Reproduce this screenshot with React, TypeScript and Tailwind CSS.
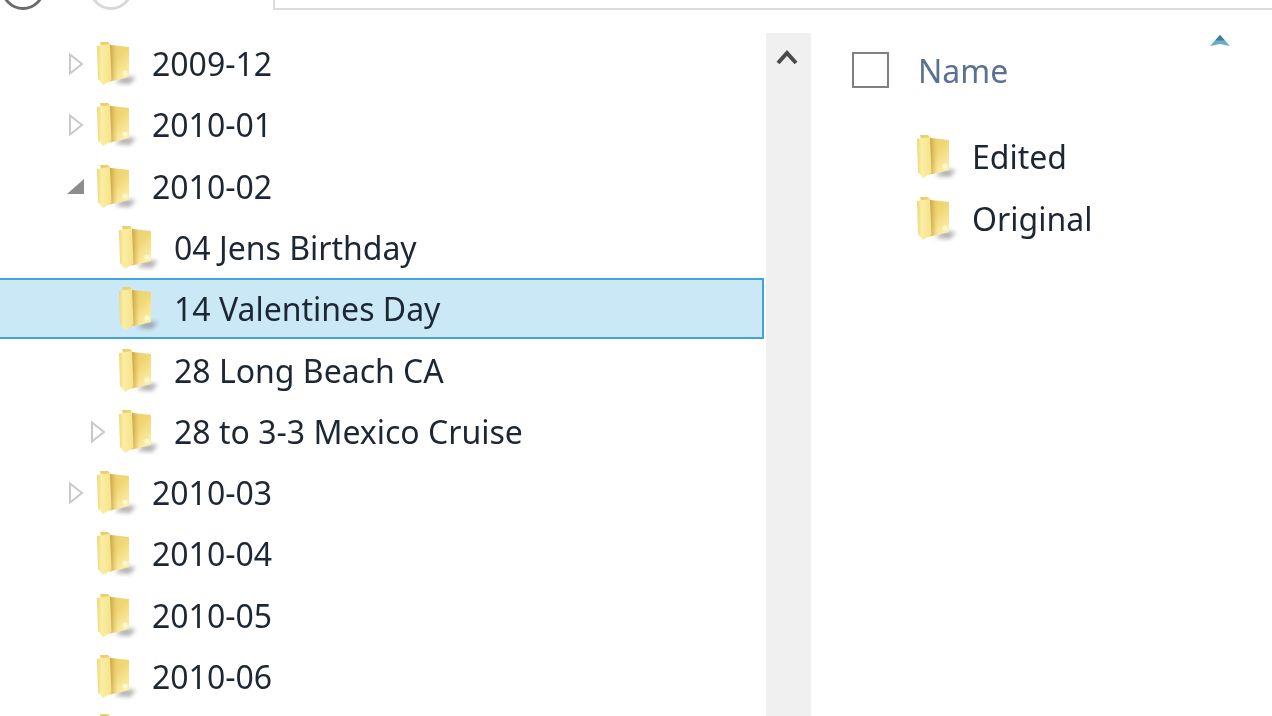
import { useId } from 'react'

type Arrow = 'closed' | 'open' | 'none'

const treeRows: { label: string; indent: 0 | 1; arrow: Arrow; selected?: boolean }[] = [
  { label: '2009-12', indent: 0, arrow: 'closed' },
  { label: '2010-01', indent: 0, arrow: 'closed' },
  { label: '2010-02', indent: 0, arrow: 'open' },
  { label: '04 Jens Birthday', indent: 1, arrow: 'none' },
  { label: '14 Valentines Day', indent: 1, arrow: 'none', selected: true },
  { label: '28 Long Beach CA', indent: 1, arrow: 'none' },
  { label: '28 to 3-3 Mexico Cruise', indent: 1, arrow: 'closed' },
  { label: '2010-03', indent: 0, arrow: 'closed' },
  { label: '2010-04', indent: 0, arrow: 'none' },
  { label: '2010-05', indent: 0, arrow: 'none' },
  { label: '2010-06', indent: 0, arrow: 'none' },
]

function FolderIcon() {
  const id = useId()
  return (
    <svg width="42" height="46" viewBox="0 0 42 46" className="shrink-0" aria-hidden="true">
      <defs>
        <linearGradient id={`${id}-back`} x1="0" y1="0" x2="0.7" y2="1">
          <stop offset="0" stopColor="#ecce6c" />
          <stop offset="0.55" stopColor="#f0d674" />
          <stop offset="1" stopColor="#fdeea6" />
        </linearGradient>
        <linearGradient id={`${id}-front`} x1="0" y1="0" x2="1" y2="0">
          <stop offset="0" stopColor="#efd475" />
          <stop offset="0.3" stopColor="#fbeea4" />
          <stop offset="1" stopColor="#f6e28a" />
        </linearGradient>
        <linearGradient id={`${id}-fold`} x1="0" y1="0" x2="1" y2="0">
          <stop offset="0" stopColor="#bf9a3c" stopOpacity="0.85" />
          <stop offset="1" stopColor="#e2c468" stopOpacity="0" />
        </linearGradient>
        <filter id={`${id}-shadow`} x="-30%" y="-30%" width="160%" height="160%">
          <feGaussianBlur stdDeviation="2" />
        </filter>
        <filter id={`${id}-soft`} x="-10%" y="-10%" width="120%" height="120%">
          <feGaussianBlur stdDeviation="0.6" />
        </filter>
      </defs>
      <path d="M26 35 L39 36 L33 43 L18 42 Z" fill="#7f7f7f" opacity="0.6" filter={`url(#${id}-shadow)`} />
      <g filter={`url(#${id}-soft)`}>
        <path d="M3 1 L11 1 L14 4 L32 6 L32 36 L12 41 Z" fill={`url(#${id}-back)`} />
        <path d="M13 4 L21 5 L21 39 L13 40 Z" fill={`url(#${id}-fold)`} />
        <path d="M0 5 L13 3 L14.5 39 L6 44 L1 38 Z" fill={`url(#${id}-front)`} />
        <circle cx="28" cy="32" r="2.6" fill="#fffbe0" opacity="0.8" />
      </g>
    </svg>
  )
}

function TreeArrow({ arrow }: { arrow: Arrow }) {
  if (arrow === 'none') return <span className="w-[18px] shrink-0" />
  if (arrow === 'open') {
    return (
      <svg width="18" height="18" viewBox="0 0 18 18" className="shrink-0" aria-hidden="true">
        <path d="M0 16 L17 16 L17 1 Z" fill="#8c8c8c" />
      </svg>
    )
  }
  return (
    <svg width="18" height="24" viewBox="0 0 18 24" className="shrink-0" aria-hidden="true">
      <path d="M3 2.5 L15 12 L3 21.5 Z" fill="#fff" stroke="#c9c9c9" strokeWidth="2" />
    </svg>
  )
}

function TreeRow({ label, indent, arrow, selected }: (typeof treeRows)[number]) {
  return (
    <div
      className={
        selected
          ? '-mt-[0.6px] mb-[0.6px] flex h-[61.3px] shrink-0 items-center border-2 border-l-0 border-[#3fa6dd] bg-[#cbe8f6]'
          : 'flex h-[61.3px] shrink-0 items-center'
      }
    >
      <div className={indent === 1 ? 'ml-[89px] flex items-center' : 'ml-[67px] flex items-center'}>
        <TreeArrow arrow={arrow} />
        <span className="ml-[12px] flex">
          <FolderIcon />
        </span>
        <span className="ml-[13px] whitespace-nowrap text-[32px] leading-none text-[#1c2733]">{label}</span>
      </div>
    </div>
  )
}

function ListRow({ label }: { label: string }) {
  return (
    <div className="flex h-[61.5px] items-center">
      <FolderIcon />
      <span className="ml-[13px] text-[32px] leading-none text-[#1c2733]">{label}</span>
    </div>
  )
}

export default function App() {
  return (
    <div className="h-[716px] w-[1272px] overflow-hidden bg-white blur-[0.6px] [font-family:'Noto_Sans','Open_Sans',sans-serif]">
      <div className="flex h-[33.4px] items-start">
        <div className="flex h-[10px] w-[273px] shrink-0 items-end overflow-hidden pl-[1px]">
          <span className="h-[44px] w-[44px] shrink-0 rounded-full border-[3px] border-[#6b6b6b]" />
          <span className="ml-[44px] h-[44px] w-[44px] shrink-0 rounded-full border-[3px] border-[#d8d8d8]" />
        </div>
        <div className="h-[10px] flex-1 border-b-2 border-l-2 border-[#dcdcdc]" />
      </div>

      <div className="flex h-[683px]">
        <div className="flex w-[764px] shrink-0 flex-col overflow-hidden">
          {treeRows.map((row) => (
            <TreeRow key={row.label} {...row} />
          ))}
          {/* next folder is cut by the window, only its top shows */}
          <div className="ml-[97px] mt-[5px] shrink-0">
            <FolderIcon />
          </div>
        </div>

        <div className="ml-[2px] flex w-[45px] shrink-0 justify-center bg-[#f0f0f0] pr-[4px] pt-[16px]">
          <svg width="24" height="16" viewBox="0 0 24 16" aria-hidden="true">
            <path d="M3 14 L12 4 L21 14" fill="none" stroke="#4a4a4a" strokeWidth="4" />
          </svg>
        </div>

        <div className="relative flex-1 pl-[41px]">
          <svg width="22" height="14" viewBox="0 0 22 14" className="absolute left-[398px] top-[1px]" aria-hidden="true">
            <path d="M11 1 L21 12 L11 10 L1 12 Z" fill="#66aecb" />
            <path d="M11 1 L16 6.5 L6 6.5 Z" fill="#3f7f9c" />
          </svg>
          <div className="flex h-[74px] items-center">
            <span className="h-[36px] w-[37px] shrink-0 border-2 border-[#808080] bg-white" />
            <span className="ml-[29px] mt-[2px] text-[32px] leading-none text-[#5a7191]">Name</span>
          </div>
          <div className="ml-[65px] mt-[19px] flex flex-col">
            <ListRow label="Edited" />
            <ListRow label="Original" />
          </div>
        </div>
      </div>
    </div>
  )
}
